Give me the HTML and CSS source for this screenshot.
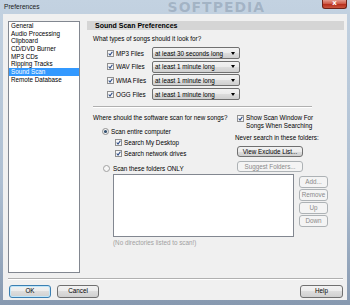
FILE: index.html
```html
<!DOCTYPE html>
<html lang="en">
<head>
    <meta charset="UTF-8">
    <meta name="viewport" content="width=device-width, initial-scale=1.0">
    <title>Preferences</title>
    <link rel="stylesheet" href="styles.css">
</head>
<body>
    <div class="window">
        <div class="titlebar">
            <span class="title">Preferences</span>
            <span class="watermark">SOFTPEDIA</span>
            <span class="close">x</span>
        </div>
        <div class="client">
            <div class="main">
                <ul class="nav">
                    <li>General</li>
                    <li>Audio Processing</li>
                    <li>Clipboard</li>
                    <li>CD/DVD Burner</li>
                    <li>MP3 CDs</li>
                    <li>Ripping Tracks</li>
                    <li class="selected">Sound Scan</li>
                    <li>Remote Database</li>
                </ul>
                <div class="panel">
                    <div class="panel-header">Sound Scan Preferences</div>
                    <div class="panel-body">
                        <p class="question">What types of songs should it look for?</p>
                        <div class="types">
                            <div class="type-row">
                                <svg class="cb" viewBox="0 0 7 7"><rect x="0.5" y="0.5" width="6" height="6" fill="#f6f6f6" stroke="#8f8f8f"/><path d="M1.7 3.5 L3 5 L5.4 1.7" fill="none" stroke="#2b4a86" stroke-width="1.1"/></svg>
                                <span class="type-label">MP3 Files</span>
                                <div class="combo"><span>at least 30 seconds long</span><i class="arrow"></i></div>
                            </div>
                            <div class="type-row">
                                <svg class="cb" viewBox="0 0 7 7"><rect x="0.5" y="0.5" width="6" height="6" fill="#f6f6f6" stroke="#8f8f8f"/><path d="M1.7 3.5 L3 5 L5.4 1.7" fill="none" stroke="#2b4a86" stroke-width="1.1"/></svg>
                                <span class="type-label">WAV Files</span>
                                <div class="combo"><span>at least 1 minute long</span><i class="arrow"></i></div>
                            </div>
                            <div class="type-row">
                                <svg class="cb" viewBox="0 0 7 7"><rect x="0.5" y="0.5" width="6" height="6" fill="#f6f6f6" stroke="#8f8f8f"/><path d="M1.7 3.5 L3 5 L5.4 1.7" fill="none" stroke="#2b4a86" stroke-width="1.1"/></svg>
                                <span class="type-label">WMA Files</span>
                                <div class="combo"><span>at least 1 minute long</span><i class="arrow"></i></div>
                            </div>
                            <div class="type-row">
                                <svg class="cb" viewBox="0 0 7 7"><rect x="0.5" y="0.5" width="6" height="6" fill="#f6f6f6" stroke="#8f8f8f"/><path d="M1.7 3.5 L3 5 L5.4 1.7" fill="none" stroke="#2b4a86" stroke-width="1.1"/></svg>
                                <span class="type-label">OGG Files</span>
                                <div class="combo"><span>at least 1 minute long</span><i class="arrow"></i></div>
                            </div>
                        </div>
                        <div class="separator"></div>
                        <div class="scan">
                            <div class="scan-left">
                                <p class="question">Where should the software scan for new songs?</p>
                                <div class="option radio-1">
                                    <svg class="rb" viewBox="0 0 7 7"><circle cx="3.5" cy="3.5" r="3" fill="#f6f6f6" stroke="#8f8f8f"/><circle cx="3.5" cy="3.5" r="1.6" fill="#34506f"/></svg>
                                    <span>Scan entire computer</span>
                                </div>
                                <div class="option sub-1">
                                    <svg class="cb" viewBox="0 0 7 7"><rect x="0.5" y="0.5" width="6" height="6" fill="#f6f6f6" stroke="#8f8f8f"/><path d="M1.7 3.5 L3 5 L5.4 1.7" fill="none" stroke="#2b4a86" stroke-width="1.1"/></svg>
                                    <span>Search My Desktop</span>
                                </div>
                                <div class="option sub-2">
                                    <svg class="cb" viewBox="0 0 7 7"><rect x="0.5" y="0.5" width="6" height="6" fill="#f6f6f6" stroke="#8f8f8f"/><path d="M1.7 3.5 L3 5 L5.4 1.7" fill="none" stroke="#2b4a86" stroke-width="1.1"/></svg>
                                    <span>Search network drives</span>
                                </div>
                                <div class="option radio-2">
                                    <svg class="rb" viewBox="0 0 7 7"><circle cx="3.5" cy="3.5" r="3" fill="#f6f6f6" stroke="#a0a0a0"/></svg>
                                    <span>Scan these folders ONLY</span>
                                </div>
                            </div>
                            <div class="scan-right">
                                <div class="option show-window">
                                    <svg class="cb" viewBox="0 0 7 7"><rect x="0.5" y="0.5" width="6" height="6" fill="#f6f6f6" stroke="#8f8f8f"/><path d="M1.7 3.5 L3 5 L5.4 1.7" fill="none" stroke="#2b4a86" stroke-width="1.1"/></svg>
                                    <span>Show Scan Window For<br>Songs When Searching</span>
                                </div>
                                <p class="never">Never search in these folders:</p>
                                <button class="btn wide">View Exclude List...</button>
                                <button class="btn wide" disabled>Suggest Folders...</button>
                            </div>
                        </div>
                        <div class="folders">
                            <div class="folder-list"></div>
                            <div class="folder-buttons">
                                <button class="btn" disabled>Add...</button>
                                <button class="btn" disabled>Remove</button>
                                <button class="btn up" disabled>Up</button>
                                <button class="btn down" disabled>Down</button>
                            </div>
                        </div>
                        <p class="note">(No directories listed to scan!)</p>
                    </div>
                </div>
            </div>
            <div class="separator footer-sep"></div>
            <div class="footer">
                <button class="btn default">OK</button>
                <button class="btn">Cancel</button>
                <button class="btn help">Help</button>
            </div>
        </div>
    </div>
</body>
</html>
```

FILE: styles.css
```css
* {
    box-sizing: border-box;
}
body {
    margin: 0;
    font-family: "Liberation Sans", Arial, sans-serif;
    font-size: 6.3px;
    color: #000;
}
.window {
    width: 350px;
    height: 305px;
    overflow: hidden;
    background: linear-gradient(to bottom, #c3d2e1 0%, #aebfd2 60%, #8799b0 100%);
}
.titlebar {
    height: 14px;
    display: flex;
    align-items: flex-start;
    padding: 0 3px 0 4px;
    overflow: hidden;
}
.title {
    font-size: 6.6px;
    line-height: 13px;
    color: #1a1a1a;
}
.watermark {
    margin-left: 128px;
    font: bold 14px/15px "DejaVu Sans", sans-serif;
    letter-spacing: 1px;
    color: rgba(70, 90, 115, 0.25);
}
.close {
    margin-left: auto;
    width: 25px;
    height: 9px;
    background: linear-gradient(to bottom, #e3998c 0%, #cf5a47 45%, #b8301d 55%, #c9553e 100%);
    border: 1px solid #6e2217;
    border-top: none;
    border-radius: 0 0 3px 3px;
    color: #fff;
    font: bold 7px/7px "DejaVu Sans", sans-serif;
    text-align: center;
}
.client {
    height: 286px;
    margin: 0 3px;
    padding: 7px 3px 2px 5px;
    background-color: #f0f0f0;
    display: flex;
    flex-direction: column;
}
.main {
    display: flex;
    gap: 7px;
    height: 252px;
}
.nav {
    width: 72px;
    margin: 0;
    padding: 0;
    list-style: none;
    background-color: #fff;
    border: 1px solid #828790;
}
.nav li {
    height: 7.7px;
    line-height: 7.7px;
    padding-left: 2px;
    white-space: nowrap;
}
.nav .selected {
    background-color: #3399ff;
    color: #fff;
}
.panel {
    flex: 1;
}
.panel-header {
    height: 9px;
    padding-left: 8px;
    background-color: #d5d5d5;
    font-weight: bold;
    font-size: 7px;
    line-height: 9px;
}
.panel-body {
    padding-left: 6px;
}
.question {
    margin: 5px 0 0;
    line-height: 8px;
    white-space: nowrap;
}
.types {
    margin-top: 4px;
    display: flex;
    flex-direction: column;
    gap: 1.7px;
}
.type-row {
    display: flex;
    align-items: center;
    height: 12px;
    padding-left: 14px;
}
.cb, .rb {
    width: 7px;
    height: 7px;
    flex: none;
}
.type-label {
    width: 36px;
    margin-left: 2px;
}
.combo {
    width: 88px;
    height: 12px;
    display: flex;
    align-items: center;
    padding: 0 4px 0 2px;
    border: 1px solid #707070;
    border-radius: 2px;
    background: linear-gradient(to bottom, #f2f2f2 0%, #ebebeb 50%, #dddddd 50%, #cfcfcf 100%);
}
.arrow {
    margin-left: auto;
    border-top: 3px solid #000;
    border-left: 2.5px solid transparent;
    border-right: 2.5px solid transparent;
}
.separator {
    width: 219px;
    margin-top: 6px;
    border-top: 1px solid #b0b0b0;
    border-bottom: 1px solid #fff;
}
.scan {
    display: grid;
    grid-template-columns: 142px 1fr;
    margin-top: 6px;
}
.scan-left .question {
    margin-top: 0;
}
.option {
    display: flex;
    align-items: center;
    gap: 2px;
    height: 8px;
    white-space: nowrap;
}
.radio-1 {
    margin-top: 5px;
    padding-left: 9px;
}
.sub-1 {
    margin-top: 3px;
    padding-left: 22px;
}
.sub-2 {
    margin-top: 3px;
    padding-left: 22px;
}
.radio-2 {
    margin-top: 7px;
    padding-left: 10px;
    gap: 3px;
}
.show-window {
    height: auto;
    align-items: flex-start;
    padding-left: 2px;
    line-height: 7.7px;
}
.show-window svg {
    margin-top: 1px;
}
.never {
    margin: 5px 0 0;
    line-height: 8px;
    white-space: nowrap;
}
.btn {
    font: inherit;
    padding: 0;
    color: #000;
    border: 1px solid #707070;
    border-radius: 3px;
    background: linear-gradient(to bottom, #f2f2f2 0%, #ebebeb 50%, #dddddd 50%, #cfcfcf 100%);
    line-height: 1;
    white-space: nowrap;
}
.btn:disabled {
    color: #8a8a8a;
    border-color: #adb2b5;
    background: #f4f4f4;
}
.wide {
    display: block;
    width: 66px;
    height: 11px;
    margin: 4px 0 0 2px;
}
.folders {
    display: flex;
    margin-top: 1.6px;
    padding-left: 20px;
}
.folder-list {
    width: 181px;
    height: 63px;
    background-color: #fff;
    border: 1px solid #828790;
}
.folder-buttons {
    width: 29px;
    margin-left: 5px;
    padding-top: 2px;
    display: flex;
    flex-direction: column;
}
.folder-buttons .btn {
    height: 12px;
}
.folder-buttons .btn + .btn {
    margin-top: 1px;
}
.folder-buttons .up {
    margin-top: 5px;
}
.folder-buttons .down {
    margin-top: 3px;
}
.note {
    margin: 2px 0 0 20px;
    line-height: 8px;
    color: #a0a0a0;
}
.footer-sep {
    width: auto;
    margin: 5px 1px 0 0;
}
.footer {
    display: flex;
    gap: 6px;
    margin-top: 5px;
    padding: 0 1px;
}
.footer .btn {
    width: 42px;
    height: 13px;
}
.footer .default {
    border-color: #3c7fb1;
    box-shadow: inset 0 0 0 1px #bfe6fa;
}
.footer .help {
    width: 43px;
    margin-left: auto;
}
```
